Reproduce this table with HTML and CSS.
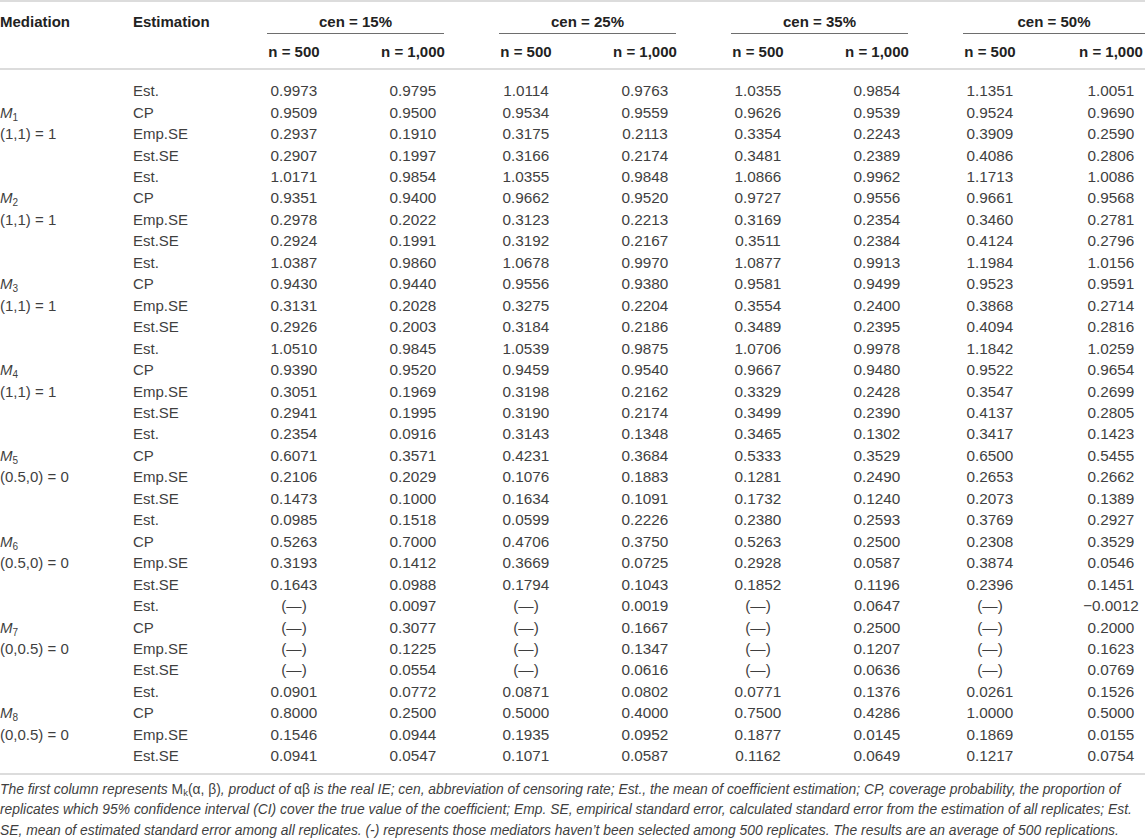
FILE: index.html
```html
<!DOCTYPE html>
<html lang="en">
<head>
<meta charset="utf-8">
<title>Mediation simulation results</title>
<link rel="stylesheet" href="styles.css">
</head>
<body>
<div class="page">
<table class="results">
<colgroup>
<col class="c-med"><col class="c-est">
<col class="c-a"><col class="c-b">
<col class="c-a"><col class="c-b">
<col class="c-a"><col class="c-b">
<col class="c-a"><col class="c-bl">
</colgroup>
<thead>
<tr class="h1">
<th rowspan="2" class="lab">Mediation</th>
<th rowspan="2" class="lab">Estimation</th>
<th colspan="2" class="grp"><div class="rule">cen = 15%</div></th>
<th colspan="2" class="grp"><div class="rule">cen = 25%</div></th>
<th colspan="2" class="grp"><div class="rule">cen = 35%</div></th>
<th colspan="2" class="grp grp-last"><div class="rule">cen = 50%</div></th>
</tr>
<tr class="h2">
<th class="a">n = 500</th><th class="b">n = 1,000</th>
<th class="a">n = 500</th><th class="b">n = 1,000</th>
<th class="a">n = 500</th><th class="b">n = 1,000</th>
<th class="a">n = 500</th><th class="bl">n = 1,000</th>
</tr>
</thead>
<tbody>
<tr><td class="med"></td><td class="est">Est.</td><td class="a">0.9973</td><td class="b">0.9795</td><td class="a">1.0114</td><td class="b">0.9763</td><td class="a">1.0355</td><td class="b">0.9854</td><td class="a">1.1351</td><td class="bl">1.0051</td></tr>
<tr><td class="med"><i>M</i><sub>1</sub></td><td class="est">CP</td><td class="a">0.9509</td><td class="b">0.9500</td><td class="a">0.9534</td><td class="b">0.9559</td><td class="a">0.9626</td><td class="b">0.9539</td><td class="a">0.9524</td><td class="bl">0.9690</td></tr>
<tr><td class="med">(1,1) = 1</td><td class="est">Emp.SE</td><td class="a">0.2937</td><td class="b">0.1910</td><td class="a">0.3175</td><td class="b">0.2113</td><td class="a">0.3354</td><td class="b">0.2243</td><td class="a">0.3909</td><td class="bl">0.2590</td></tr>
<tr><td class="med"></td><td class="est">Est.SE</td><td class="a">0.2907</td><td class="b">0.1997</td><td class="a">0.3166</td><td class="b">0.2174</td><td class="a">0.3481</td><td class="b">0.2389</td><td class="a">0.4086</td><td class="bl">0.2806</td></tr>

<tr><td class="med"></td><td class="est">Est.</td><td class="a">1.0171</td><td class="b">0.9854</td><td class="a">1.0355</td><td class="b">0.9848</td><td class="a">1.0866</td><td class="b">0.9962</td><td class="a">1.1713</td><td class="bl">1.0086</td></tr>
<tr><td class="med"><i>M</i><sub>2</sub></td><td class="est">CP</td><td class="a">0.9351</td><td class="b">0.9400</td><td class="a">0.9662</td><td class="b">0.9520</td><td class="a">0.9727</td><td class="b">0.9556</td><td class="a">0.9661</td><td class="bl">0.9568</td></tr>
<tr><td class="med">(1,1) = 1</td><td class="est">Emp.SE</td><td class="a">0.2978</td><td class="b">0.2022</td><td class="a">0.3123</td><td class="b">0.2213</td><td class="a">0.3169</td><td class="b">0.2354</td><td class="a">0.3460</td><td class="bl">0.2781</td></tr>
<tr><td class="med"></td><td class="est">Est.SE</td><td class="a">0.2924</td><td class="b">0.1991</td><td class="a">0.3192</td><td class="b">0.2167</td><td class="a">0.3511</td><td class="b">0.2384</td><td class="a">0.4124</td><td class="bl">0.2796</td></tr>

<tr><td class="med"></td><td class="est">Est.</td><td class="a">1.0387</td><td class="b">0.9860</td><td class="a">1.0678</td><td class="b">0.9970</td><td class="a">1.0877</td><td class="b">0.9913</td><td class="a">1.1984</td><td class="bl">1.0156</td></tr>
<tr><td class="med"><i>M</i><sub>3</sub></td><td class="est">CP</td><td class="a">0.9430</td><td class="b">0.9440</td><td class="a">0.9556</td><td class="b">0.9380</td><td class="a">0.9581</td><td class="b">0.9499</td><td class="a">0.9523</td><td class="bl">0.9591</td></tr>
<tr><td class="med">(1,1) = 1</td><td class="est">Emp.SE</td><td class="a">0.3131</td><td class="b">0.2028</td><td class="a">0.3275</td><td class="b">0.2204</td><td class="a">0.3554</td><td class="b">0.2400</td><td class="a">0.3868</td><td class="bl">0.2714</td></tr>
<tr><td class="med"></td><td class="est">Est.SE</td><td class="a">0.2926</td><td class="b">0.2003</td><td class="a">0.3184</td><td class="b">0.2186</td><td class="a">0.3489</td><td class="b">0.2395</td><td class="a">0.4094</td><td class="bl">0.2816</td></tr>

<tr><td class="med"></td><td class="est">Est.</td><td class="a">1.0510</td><td class="b">0.9845</td><td class="a">1.0539</td><td class="b">0.9875</td><td class="a">1.0706</td><td class="b">0.9978</td><td class="a">1.1842</td><td class="bl">1.0259</td></tr>
<tr><td class="med"><i>M</i><sub>4</sub></td><td class="est">CP</td><td class="a">0.9390</td><td class="b">0.9520</td><td class="a">0.9459</td><td class="b">0.9540</td><td class="a">0.9667</td><td class="b">0.9480</td><td class="a">0.9522</td><td class="bl">0.9654</td></tr>
<tr><td class="med">(1,1) = 1</td><td class="est">Emp.SE</td><td class="a">0.3051</td><td class="b">0.1969</td><td class="a">0.3198</td><td class="b">0.2162</td><td class="a">0.3329</td><td class="b">0.2428</td><td class="a">0.3547</td><td class="bl">0.2699</td></tr>
<tr><td class="med"></td><td class="est">Est.SE</td><td class="a">0.2941</td><td class="b">0.1995</td><td class="a">0.3190</td><td class="b">0.2174</td><td class="a">0.3499</td><td class="b">0.2390</td><td class="a">0.4137</td><td class="bl">0.2805</td></tr>

<tr><td class="med"></td><td class="est">Est.</td><td class="a">0.2354</td><td class="b">0.0916</td><td class="a">0.3143</td><td class="b">0.1348</td><td class="a">0.3465</td><td class="b">0.1302</td><td class="a">0.3417</td><td class="bl">0.1423</td></tr>
<tr><td class="med"><i>M</i><sub>5</sub></td><td class="est">CP</td><td class="a">0.6071</td><td class="b">0.3571</td><td class="a">0.4231</td><td class="b">0.3684</td><td class="a">0.5333</td><td class="b">0.3529</td><td class="a">0.6500</td><td class="bl">0.5455</td></tr>
<tr><td class="med">(0.5,0) = 0</td><td class="est">Emp.SE</td><td class="a">0.2106</td><td class="b">0.2029</td><td class="a">0.1076</td><td class="b">0.1883</td><td class="a">0.1281</td><td class="b">0.2490</td><td class="a">0.2653</td><td class="bl">0.2662</td></tr>
<tr><td class="med"></td><td class="est">Est.SE</td><td class="a">0.1473</td><td class="b">0.1000</td><td class="a">0.1634</td><td class="b">0.1091</td><td class="a">0.1732</td><td class="b">0.1240</td><td class="a">0.2073</td><td class="bl">0.1389</td></tr>

<tr><td class="med"></td><td class="est">Est.</td><td class="a">0.0985</td><td class="b">0.1518</td><td class="a">0.0599</td><td class="b">0.2226</td><td class="a">0.2380</td><td class="b">0.2593</td><td class="a">0.3769</td><td class="bl">0.2927</td></tr>
<tr><td class="med"><i>M</i><sub>6</sub></td><td class="est">CP</td><td class="a">0.5263</td><td class="b">0.7000</td><td class="a">0.4706</td><td class="b">0.3750</td><td class="a">0.5263</td><td class="b">0.2500</td><td class="a">0.2308</td><td class="bl">0.3529</td></tr>
<tr><td class="med">(0.5,0) = 0</td><td class="est">Emp.SE</td><td class="a">0.3193</td><td class="b">0.1412</td><td class="a">0.3669</td><td class="b">0.0725</td><td class="a">0.2928</td><td class="b">0.0587</td><td class="a">0.3874</td><td class="bl">0.0546</td></tr>
<tr><td class="med"></td><td class="est">Est.SE</td><td class="a">0.1643</td><td class="b">0.0988</td><td class="a">0.1794</td><td class="b">0.1043</td><td class="a">0.1852</td><td class="b">0.1196</td><td class="a">0.2396</td><td class="bl">0.1451</td></tr>

<tr><td class="med"></td><td class="est">Est.</td><td class="a">(—)</td><td class="b">0.0097</td><td class="a">(—)</td><td class="b">0.0019</td><td class="a">(—)</td><td class="b">0.0647</td><td class="a">(—)</td><td class="bl">−0.0012</td></tr>
<tr><td class="med"><i>M</i><sub>7</sub></td><td class="est">CP</td><td class="a">(—)</td><td class="b">0.3077</td><td class="a">(—)</td><td class="b">0.1667</td><td class="a">(—)</td><td class="b">0.2500</td><td class="a">(—)</td><td class="bl">0.2000</td></tr>
<tr><td class="med">(0,0.5) = 0</td><td class="est">Emp.SE</td><td class="a">(—)</td><td class="b">0.1225</td><td class="a">(—)</td><td class="b">0.1347</td><td class="a">(—)</td><td class="b">0.1207</td><td class="a">(—)</td><td class="bl">0.1623</td></tr>
<tr><td class="med"></td><td class="est">Est.SE</td><td class="a">(—)</td><td class="b">0.0554</td><td class="a">(—)</td><td class="b">0.0616</td><td class="a">(—)</td><td class="b">0.0636</td><td class="a">(—)</td><td class="bl">0.0769</td></tr>

<tr><td class="med"></td><td class="est">Est.</td><td class="a">0.0901</td><td class="b">0.0772</td><td class="a">0.0871</td><td class="b">0.0802</td><td class="a">0.0771</td><td class="b">0.1376</td><td class="a">0.0261</td><td class="bl">0.1526</td></tr>
<tr><td class="med"><i>M</i><sub>8</sub></td><td class="est">CP</td><td class="a">0.8000</td><td class="b">0.2500</td><td class="a">0.5000</td><td class="b">0.4000</td><td class="a">0.7500</td><td class="b">0.4286</td><td class="a">1.0000</td><td class="bl">0.5000</td></tr>
<tr><td class="med">(0,0.5) = 0</td><td class="est">Emp.SE</td><td class="a">0.1546</td><td class="b">0.0944</td><td class="a">0.1935</td><td class="b">0.0952</td><td class="a">0.1877</td><td class="b">0.0145</td><td class="a">0.1869</td><td class="bl">0.0155</td></tr>
<tr><td class="med"></td><td class="est">Est.SE</td><td class="a">0.0941</td><td class="b">0.0547</td><td class="a">0.1071</td><td class="b">0.0587</td><td class="a">0.1162</td><td class="b">0.0649</td><td class="a">0.1217</td><td class="bl">0.0754</td></tr>
</tbody>
</table>
<p class="note">The first column represents <span class="up">M<sub>k</sub>(α, β)</span>, product of <span class="up">αβ</span> is the real IE; cen, abbreviation of censoring rate; Est., the mean of coefficient estimation; CP, coverage probability, the proportion of<br>replicates which 95% confidence interval (CI) cover the true value of the coefficient; Emp. SE, empirical standard error, calculated standard error from the estimation of all replicates; Est.<br>SE, mean of estimated standard error among all replicates. (-) represents those mediators haven’t been selected among 500 replicates. The results are an average of 500 replications.</p>
</div>
</body>
</html>
```

FILE: styles.css
```css
* {
  box-sizing: border-box;
}

html,
body {
  margin: 0;
  padding: 0;
  background: #ffffff;
}

body {
  font-family: "Liberation Sans", Arial, Helvetica, sans-serif;
  font-size: 15px;
  color: #3f3f3f;
}

.page {
  width: 1145px;
}

.results {
  width: 1145px;
  table-layout: fixed;
  border-collapse: separate;
  border-spacing: 0;
  border-top: 2px solid #dcdcdc;
  border-bottom: 2px solid #dcdcdc;
}

col.c-med { width: 133px; }
col.c-est { width: 107px; }
col.c-a { width: 108px; }
col.c-b { width: 124px; }
col.c-bl { width: 101px; }

th,
td {
  padding: 0;
  text-align: center;
  vertical-align: top;
  white-space: nowrap;
  font-weight: normal;
  line-height: 21.45px;
}

td.a,
td.b,
td.bl {
  font-size: 15.3px;
}

thead th {
  font-weight: bold;
  color: #222222;
  line-height: 21.6px;
}

.h1 th {
  padding-top: 9px;
}

th.lab {
  text-align: left;
  border-bottom: 2px solid #dcdcdc;
}

.h2 th {
  padding-top: 7.6px;
  padding-bottom: 5.6px;
  border-bottom: 2px solid #dcdcdc;
}

.rule {
  margin: 0 28px 0 27px;
  border-bottom: 1px solid #6e6e6e;
}

.grp-last .rule {
  margin-right: 0;
}

.b {
  padding-left: 6px;
}

.bl {
  padding-left: 33px;
}

td.med,
td.est {
  text-align: left;
}

td.med i {
  font-style: italic;
}

sub {
  font-size: 10px;
  line-height: 0;
  vertical-align: -3px;
}

tbody tr:first-child td {
  padding-top: 9.8px;
}

tbody tr:last-child td {
  padding-bottom: 6.6px;
}

.note {
  margin: 3.5px 0 0 0;
  font-size: 13.85px;
  line-height: 20.5px;
  font-style: italic;
  color: #3f3f3f;
  white-space: nowrap;
}

.note .up {
  font-style: normal;
}

.note sub {
  font-size: 9.5px;
  vertical-align: -2px;
}
```
